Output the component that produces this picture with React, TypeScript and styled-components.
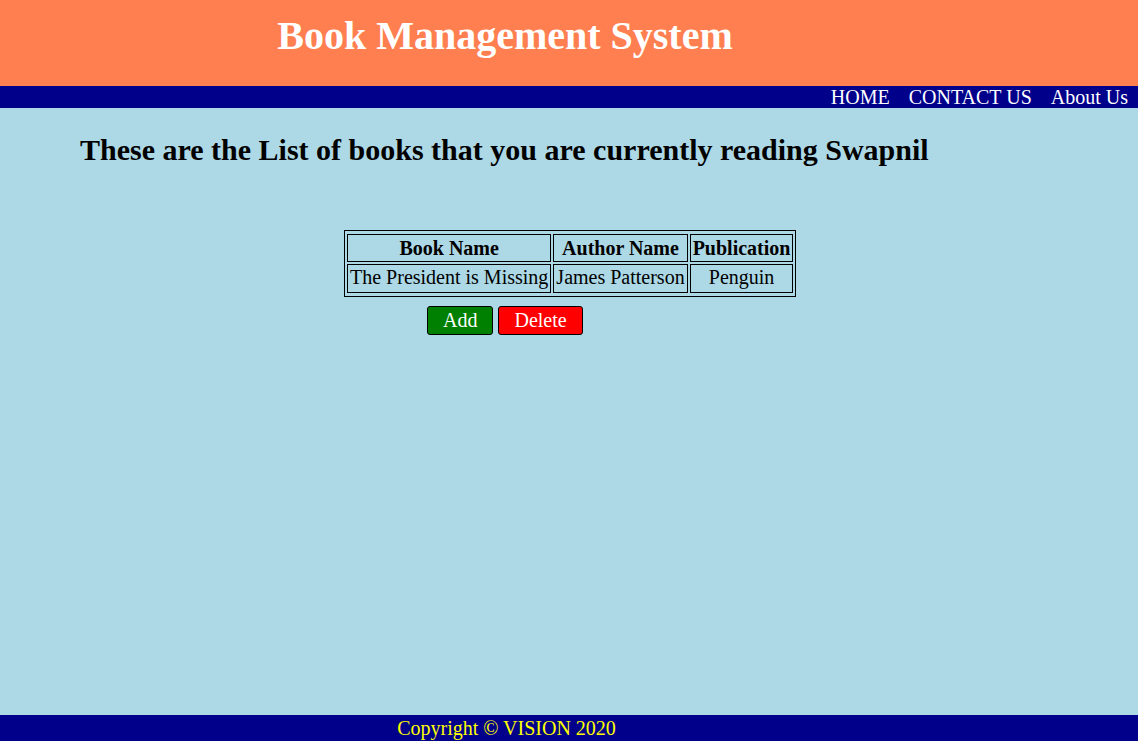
import React from "react";
import styled, { createGlobalStyle } from "styled-components";

const Global = createGlobalStyle`
  html, body { margin: 0; padding: 0; }
  body {
    background: #add8e6;
    font-family: "Liberation Serif", "Times New Roman", serif;
    color: #000;
  }
`;

const Page = styled.div`
  display: flex;
  flex-direction: column;
  min-height: 741px;
`;

const Header = styled.header`
  background: #ff7f50;
  height: 86px;
  display: flex;
  align-items: flex-start;
  justify-content: center;
  padding-right: 128px;
  box-sizing: border-box;
`;

const Title = styled.h1`
  margin: 12px 0 0;
  color: #fff;
  font-size: 40px;
  font-weight: bold;
`;

const Nav = styled.nav`
  background: #00008b;
  height: 22px;
  display: flex;
  justify-content: flex-end;
  align-items: center;
  gap: 19px;
  padding-right: 10px;
`;

const NavLink = styled.a`
  color: #fff;
  font-size: 20px;
  text-decoration: none;
  line-height: 22px;
`;

const Main = styled.main`
  flex: 1;
  display: flex;
  flex-direction: column;
`;

const Heading = styled.h2`
  margin: 25px 0 0 80px;
  font-size: 30px;
  line-height: 34px;
  font-weight: bold;
`;

const Table = styled.table`
  margin: 63px 0 0 344px;
  border: 1px solid #000;
  padding: 1px 0;
  border-spacing: 2px;
  font-size: 20px;
`;

const Th = styled.th`
  border: 1px solid #000;
  padding: 2px 2px 1px;
`;

const Td = styled.td`
  border: 1px solid #000;
  padding: 1px 2px 3px;
  text-align: center;
`;

const Actions = styled.div`
  display: flex;
  gap: 5px;
  margin: 9px 0 0 427px;
`;

const Button = styled.button<{ $bg: string }>`
  background: ${(p) => p.$bg};
  color: #fff;
  font-family: "Liberation Serif", "Times New Roman", serif;
  font-size: 20px;
  border: 1px solid #000;
  border-radius: 3px;
  padding: 1px 15px;
  height: 29px;
`;

const Footer = styled.footer`
  background: #00008b;
  height: 26px;
  display: flex;
  justify-content: center;
  align-items: center;
  padding-right: 125px;
  color: #ffff00;
  font-size: 20px;
`;

export default function App() {
  return (
    <Page>
      <Global />
      <Header>
        <Title>Book Management System</Title>
      </Header>
      <Nav>
        <NavLink href="#">HOME</NavLink>
        <NavLink href="#">CONTACT US</NavLink>
        <NavLink href="#">About Us</NavLink>
      </Nav>
      <Main>
        <Heading>These are the List of books that you are currently reading Swapnil</Heading>
        <div>
          <Table>
            <thead>
              <tr>
                <Th>Book Name</Th>
                <Th>Author Name</Th>
                <Th>Publication</Th>
              </tr>
            </thead>
            <tbody>
              <tr>
                <Td>The President is Missing</Td>
                <Td>James Patterson</Td>
                <Td>Penguin</Td>
              </tr>
            </tbody>
          </Table>
        </div>
        <Actions>
          <Button $bg="#008000">Add</Button>
          <Button $bg="#ff0000">Delete</Button>
        </Actions>
      </Main>
      <Footer>Copyright © VISION 2020</Footer>
    </Page>
  );
}
